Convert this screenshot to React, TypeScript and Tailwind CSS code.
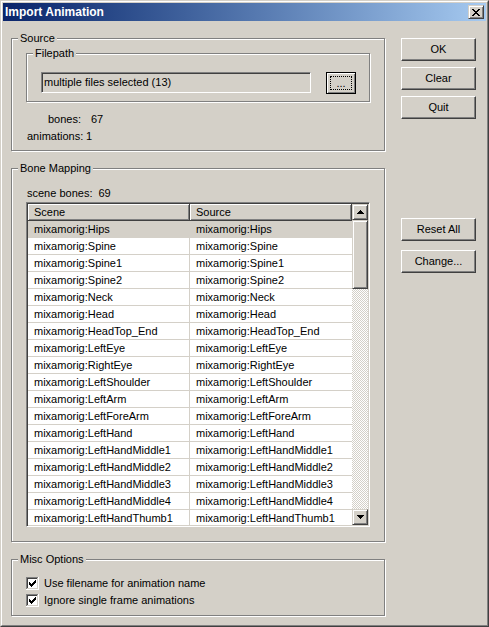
import type { ReactNode } from "react";

const bones = [
  "Hips",
  "Spine",
  "Spine1",
  "Spine2",
  "Neck",
  "Head",
  "HeadTop_End",
  "LeftEye",
  "RightEye",
  "LeftShoulder",
  "LeftArm",
  "LeftForeArm",
  "LeftHand",
  "LeftHandMiddle1",
  "LeftHandMiddle2",
  "LeftHandMiddle3",
  "LeftHandMiddle4",
  "LeftHandThumb1",
];

// classic 3d edges
const raised =
  "border border-t-white border-l-white border-r-[#404040] border-b-[#404040] shadow-[inset_-1px_-1px_0_#808080]";
const raisedSmall =
  "border border-t-[#D4D0C8] border-l-[#D4D0C8] border-r-[#404040] border-b-[#404040] shadow-[inset_1px_1px_0_#fff,inset_-1px_-1px_0_#808080]";
const sunken =
  "border border-t-[#808080] border-l-[#808080] border-r-white border-b-white shadow-[inset_1px_1px_0_#404040,inset_-1px_-1px_0_#D4D0C8] p-px";

function Group({ label, className, children }: { label: string; className: string; children?: ReactNode }) {
  return (
    <div className={`relative border border-[#808080] shadow-[inset_1px_1px_0_#fff,1px_1px_0_#fff] ${className}`}>
      <span className="absolute -top-[7px] left-[6px] px-[2px] bg-[#D4D0C8] leading-[13px]">{label}</span>
      {children}
    </div>
  );
}

function Button({ children, className = "" }: { children: ReactNode; className?: string }) {
  return (
    <div className={`flex items-center justify-center w-[75px] h-[23px] ${raised} ${className}`}>{children}</div>
  );
}

function Arrow({ down }: { down?: boolean }) {
  const rows = down ? [0, 1, 2, 3] : [3, 2, 1, 0];
  return (
    <svg width="7" height="4" shapeRendering="crispEdges">
      {rows.map((r, i) => (
        <rect key={i} x={r} y={i} width={7 - r * 2} height="1" fill="#000" />
      ))}
    </svg>
  );
}

function Checkbox() {
  const check = [
    [0, 2], [1, 3], [2, 4], [3, 3], [4, 2], [5, 1], [6, 0],
  ];
  return (
    <svg width="13" height="13" shapeRendering="crispEdges" className="shrink-0">
      <rect x="0" y="0" width="13" height="13" fill="#fff" />
      <rect x="0" y="0" width="12" height="1" fill="#808080" />
      <rect x="0" y="0" width="1" height="12" fill="#808080" />
      <rect x="1" y="1" width="10" height="1" fill="#404040" />
      <rect x="1" y="1" width="1" height="10" fill="#404040" />
      <rect x="11" y="1" width="1" height="11" fill="#D4D0C8" />
      <rect x="1" y="11" width="11" height="1" fill="#D4D0C8" />
      {check.map(([x, y], i) => (
        <rect key={i} x={3 + x} y={3 + y} width="1" height="3" fill="#000" />
      ))}
    </svg>
  );
}

function CloseGlyph() {
  const px = [
    "xx....xx",
    ".xx..xx.",
    "..xxxx..",
    "...xx...",
    "..xxxx..",
    ".xx..xx.",
    "xx....xx",
  ];
  return (
    <svg width="8" height="7" shapeRendering="crispEdges">
      {px.flatMap((row, y) =>
        row.split("").map((c, x) => (c === "x" ? <rect key={`${x}-${y}`} x={x} y={y} width="1" height="1" fill="#000" /> : null))
      )}
    </svg>
  );
}

export default function App() {
  return (
    <div className="w-[489px] h-[627px] bg-[#D4D0C8] border border-t-[#D4D0C8] border-l-[#D4D0C8] border-r-[#404040] border-b-[#404040] font-['Liberation_Sans',Arial,sans-serif] text-[11px] leading-[13px] text-black">
      <div className="h-full border border-t-white border-l-white border-r-[#808080] border-b-[#808080] p-px">
        {/* Title bar */}
        <div className="flex items-center h-[18px] bg-linear-to-r from-[#0A246A] to-[#A6CAF0] pl-[2px] pr-[2px]">
          <span className="font-bold text-white text-[12px]">Import Animation</span>
          <div className={`ml-auto flex items-center justify-center w-[16px] h-[14px] bg-[#D4D0C8] ${raisedSmall}`}>
            <CloseGlyph />
          </div>
        </div>

        <div className="flex pl-[8px] pt-[17px]">
          {/* Left column */}
          <div className="flex flex-col w-[374px]">
            <Group label="Source" className="h-[113px] pt-[14px] pl-[14px]">
              <Group label="Filepath" className="w-[344px] h-[49px] pt-[18px] pl-[14px]">
                <div className="flex items-start">
                  <div className={`flex items-center w-[270px] h-[21px] pl-[2px] ${sunken}`}>
                    multiple files selected (13)
                  </div>
                  <div className="relative ml-[15px] w-[30px] h-[22px] border border-black shadow-[inset_1px_1px_0_#fff,inset_-1px_-1px_0_#808080]">
                    <div className="absolute inset-[3px] border border-dotted border-black" />
                    <span className="absolute left-0 right-0 bottom-[4px] text-center leading-[11px]">...</span>
                  </div>
                </div>
              </Group>
              <div className="flex h-[17px] items-center mt-[9px] pl-[22px]">
                <span className="w-[43px]">bones:</span>
                <span>67</span>
              </div>
              <div className="flex h-[17px] items-center pl-[1px]">
                <span className="w-[59px]">animations:</span>
                <span>1</span>
              </div>
            </Group>

            <Group label="Bone Mapping" className="mt-[17px] h-[374px] pt-[18px] pl-[14px]">
              <div className="pl-[1px]">
                scene bones:<span className="ml-[6px]">69</span>
              </div>
              <div className={`mt-[2px] w-[344px] h-[325px] bg-white flex ${sunken}`}>
                <div className="w-[324px] flex flex-col overflow-hidden">
                  <div className="flex shrink-0">
                    <div className="w-[162px] h-[17px] flex items-center pl-[6px] bg-[#D4D0C8] border-r border-b border-[#404040] shadow-[inset_1px_1px_0_#fff,inset_-1px_-1px_0_#808080]">
                      Scene
                    </div>
                    <div className="w-[162px] h-[17px] flex items-center pl-[6px] bg-[#D4D0C8] border-r border-b border-[#404040] shadow-[inset_1px_1px_0_#fff,inset_-1px_-1px_0_#808080]">
                      Source
                    </div>
                  </div>
                  {bones.map((b, i) => (
                    <div
                      key={b}
                      className={`flex shrink-0 h-[17px] border-b border-[#D4D0C8] ${i === 0 ? "bg-[#D4D0C8]" : ""}`}
                    >
                      <div className="w-[162px] flex items-center pl-[6px] border-r border-[#D4D0C8]">
                        mixamorig:{b}
                      </div>
                      <div className="flex items-center pl-[6px]">mixamorig:{b}</div>
                    </div>
                  ))}
                </div>
                {/* Scrollbar */}
                <div className="w-[16px] flex flex-col">
                  <div className={`h-[16px] flex items-center justify-center bg-[#D4D0C8] ${raisedSmall}`}>
                    <Arrow />
                  </div>
                  <div className={`h-[69px] bg-[#D4D0C8] ${raisedSmall}`} />
                  <div className="flex-1 bg-[repeating-conic-gradient(#D4D0C8_0_25%,#fff_0_50%)] bg-size-[2px_2px]" />
                  <div className={`h-[16px] flex items-center justify-center bg-[#D4D0C8] ${raisedSmall}`}>
                    <Arrow down />
                  </div>
                </div>
              </div>
            </Group>

            <Group label="Misc Options" className="mt-[17px] h-[57px] pt-[15px] pl-[14px]">
              <div className="flex items-center h-[17px] gap-[5px]">
                <Checkbox />
                <span>Use filename for animation name</span>
              </div>
              <div className="flex items-center h-[17px] gap-[5px]">
                <Checkbox />
                <span>Ignore single frame animations</span>
              </div>
            </Group>
          </div>

          {/* Right column */}
          <div className="flex flex-col ml-[16px]">
            <Button>OK</Button>
            <Button className="mt-[6px]">Clear</Button>
            <Button className="mt-[6px]">Quit</Button>
            <Button className="mt-[99px]">Reset All</Button>
            <Button className="mt-[9px]">Change...</Button>
          </div>
        </div>
      </div>
    </div>
  );
}
